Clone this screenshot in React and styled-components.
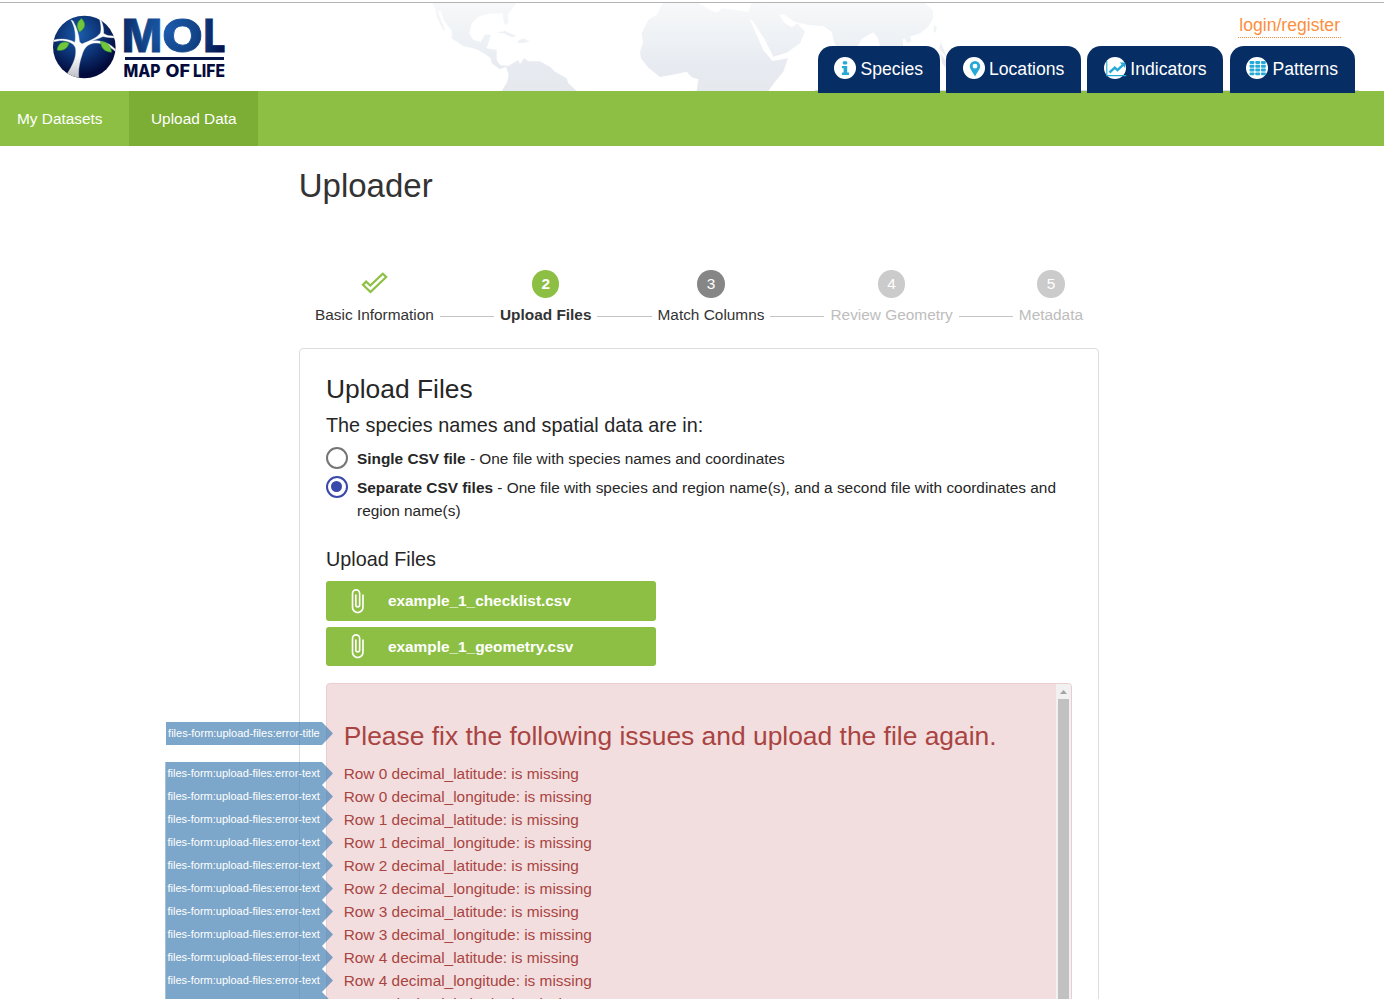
import React from 'react';
import styled, { createGlobalStyle } from 'styled-components';

const GlobalStyle = createGlobalStyle`
  * { box-sizing: border-box; }
  html, body { margin: 0; padding: 0; background: #fff; }
  body {
    font-family: "Liberation Sans", Arial, sans-serif;
    font-size: 15.4px;
    line-height: 23px;
    color: #333;
  }
`;

const Page = styled.div`
  height: 999px;
  overflow: hidden;
  background: #fff;
`;

const Header = styled.header`
  position: relative;
  margin-top: 2px;
  height: 89px;
  border-top: 1px solid #b3b3b3;
  display: flex;
  justify-content: space-between;
`;

const WorldMap = styled.svg`
  position: absolute;
  left: 420px;
  top: 0;
`;

const LogoLink = styled.a`
  display: block;
  margin: 9px 0 0 50px;
  height: 70px;
`;

const HeaderSide = styled.div`
  position: relative;
  z-index: 2;
  display: flex;
  flex-direction: column;
  align-items: flex-end;
  padding-right: 25px;
`;

const Login = styled.a`
  margin: 11px 18px 0 0;
  padding: 0 1px;
  height: 24px;
  line-height: 23px;
  font-size: 17.6px;
  color: #fc8f3d;
  border-bottom: 1px dotted #fc8f3d;
`;

const Tabs = styled.div`
  display: flex;
  gap: 6.6px;
  height: 45px;
  margin-top: 8px;
  padding: 0 4.4px 0 3px;
  border-bottom: 1px solid #d5d8dc;
`;

const Tab = styled.a`
  display: flex;
  align-items: center;
  gap: 4.4px;
  height: 47px;
  padding: 0 16.5px 3px;
  border-radius: 14px 14px 0 0;
  background: #062d64;
  color: #fff;
  font-size: 17.6px;
`;

const TabLabel = styled.span`
  padding-top: 2px;
`;

const TabIcon = styled.svg`
  width: 22px;
  height: 22px;
  flex: none;
`;

const Nav = styled.nav`
  display: flex;
  height: 55px;
  background: #8dbf44;
`;

const NavItem = styled.a`
  width: 129px;
  padding-left: ${(p) => (p.$active ? 22 : 17)}px;
  line-height: 55px;
  color: #fff;
  background: ${(p) => (p.$active ? '#7cad34' : 'transparent')};
`;

const Main = styled.main`
  width: 800px;
  margin-left: 299px;
`;

const PageTitle = styled.h1`
  margin: 0 0 0 -0.3px;
  padding-top: 21px;
  height: 124px;
  font-size: 33px;
  line-height: 37px;
  font-weight: 400;
`;

const Stepper = styled.div`
  display: flex;
  align-items: flex-end;
  gap: 6px;
  height: 57px;
  padding: 0 16px;
`;

const Step = styled.div`
  display: flex;
  flex-direction: column;
  align-items: center;
  gap: 5px;
  height: 57px;
  font-weight: ${(p) => (p.$current ? 700 : 400)};
  color: ${(p) => (p.$muted ? '#bdbdbd' : '#333')};
`;

const StepBadge = styled.span`
  display: flex;
  align-items: center;
  justify-content: center;
  width: 27.5px;
  height: 27.5px;
  flex: none;
  border-radius: 50%;
  background: ${(p) => p.$color};
  color: #fff;
`;

const StepLine = styled.span`
  flex: 1;
  height: 1px;
  margin-bottom: 10px;
  background: #c4c4c4;
`;

const Panel = styled.section`
  margin-top: 21px;
  height: 700px;
  padding: 26px 26px 0;
  border: 1px solid #ddd;
  border-radius: 4px;
`;

const Heading = styled.h2`
  margin: 0;
  font-size: 26.4px;
  line-height: 29px;
  font-weight: 400;
`;

const Subheading = styled.h3`
  margin: ${(p) => p.$top}px 0 0;
  font-size: 19.8px;
  line-height: 22px;
  font-weight: 400;
  color: #262626;
`;

const PanelHeading = styled(Heading)`
  color: #262626;
`;

const Option = styled.label`
  display: flex;
  gap: 9px;
  margin-top: ${(p) => p.$top}px;
  color: #262626;
`;

const Radio = styled.span`
  display: flex;
  align-items: center;
  justify-content: center;
  flex: none;
  width: 22px;
  height: 22px;
  border: 2px solid ${(p) => (p.$checked ? '#3949ab' : '#757575')};
  border-radius: 50%;
`;

const RadioDot = styled.span`
  width: 11px;
  height: 11px;
  margin-left: -0.5px;
  margin-top: -0.5px;
  border-radius: 50%;
  background: #3949ab;
`;

const FileButton = styled.div`
  display: flex;
  align-items: center;
  width: 330px;
  height: ${(p) => p.$height}px;
  margin-top: ${(p) => p.$top}px;
  padding-left: 17.6px;
  gap: 17.9px;
  border-radius: 3px;
  background: #8dbf44;
  color: #fff;
  font-weight: 700;
`;

const FileName = styled.span`
  line-height: 39px;
  align-self: flex-start;
`;

const Alert = styled.div`
  display: flex;
  justify-content: space-between;
  margin-top: 17px;
  height: 400px;
  border: 1px solid #ebccd1;
  border-radius: 4px;
  background: #f2dede;
  color: #a94442;
`;

const AlertBody = styled.div`
  padding: 38px 0 0 16.7px;
`;

const AlertTitle = styled(Heading)`
  position: relative;
  margin-bottom: 11px;
`;

const AlertRow = styled.div`
  position: relative;
  height: 23px;
`;

const Tag = styled.span`
  position: absolute;
  right: calc(100% + 10.7px);
  top: 0;
  height: 23px;
  padding: 0 13.3px 0 2.2px;
  background: rgba(70, 130, 180, 0.7);
  clip-path: polygon(0 0, calc(100% - 11px) 0, 100% 50%, calc(100% - 11px) 100%, 0 100%);
  color: #fff;
  font-size: 11px;
  line-height: 22px;
  white-space: nowrap;
`;

const Scrollbar = styled.div`
  display: flex;
  flex-direction: column;
  align-items: center;
  width: 15px;
  background: #f1f1f1;
  border-radius: 0 3px 0 0;
`;

const ScrollThumb = styled.div`
  width: 11px;
  flex: 1;
  background: #c1c1c1;
`;

const letterStyle = { fontFamily: 'Inter, sans-serif', fontWeight: 800 };

function Logo() {
  return (
    <svg width="180" height="70" viewBox="50 12 180 70" overflow="visible">
      <defs>
        <radialGradient id="globe" cx="0.42" cy="0.3" r="0.65">
          <stop offset="0" stopColor="#1b5cab" />
          <stop offset="0.55" stopColor="#0c3274" />
          <stop offset="1" stopColor="#020b3b" />
        </radialGradient>
        <radialGradient id="letters" gradientUnits="userSpaceOnUse" cx="168" cy="29" r="58">
          <stop offset="0" stopColor="#1b5bad" />
          <stop offset="0.5" stopColor="#124488" />
          <stop offset="1" stopColor="#041551" />
        </radialGradient>
        <linearGradient id="trunk" x1="0" y1="0" x2="0" y2="1">
          <stop offset="0.6" stopColor="#fff" />
          <stop offset="1" stopColor="#b8bbc2" />
        </linearGradient>
        <clipPath id="disc"><circle cx="84.3" cy="47" r="31.3" /></clipPath>
      </defs>
      <circle cx="84.3" cy="47" r="31.3" fill="url(#globe)" />
      <g clipPath="url(#disc)">
        <path fill="url(#trunk)" stroke="url(#trunk)" strokeWidth="0.400" d="M67 74C73 65 77 56 75.5 48C74 43 68 40.5 60 40.5L52 42V40.5C61 38 69 39 75 42.5C76 34 75 27 71 20L73 21C77 28 79 35 79.500 42L82 44C89 41 97 38 100.500 33C101.500 29 101 24 99.500 19L101 20C103 25 104 29 103.500 33C106 36 111 36 116 36V38C111 37.500 106 37.500 103 36.500C98 39 94 40 91 41C99 40 109 42 116 50L115 51C107 44 98 42 92 43.500C86 45 83.500 50 82 55C79 64 78 71 79 79L66 76Z" />
        <g fill="#72c63c" stroke="#309833" strokeWidth="0.6">
          <path d="M81.500 18.500C86 23 86 28 79.500 32C76 27 76.500 22 81.500 18.500Z" />
          <path d="M57 50C58.500 43 63 40.500 69 43C67.500 49 62.500 51.500 57 50Z" />
          <path d="M100.500 41.500C107 41.500 111 46 111.500 52.200C104.500 52 101 48 100.500 41.500Z" />
        </g>
      </g>
      <g {...letterStyle} fontSize="45.500" fill="url(#letters)" stroke="url(#letters)" strokeWidth="0.800">
        <text x="122" y="51.500" textLength="40" lengthAdjust="spacingAndGlyphs">M</text>
        <text x="162" y="51.500" textLength="41" lengthAdjust="spacingAndGlyphs">O</text>
        <text x="203.500" y="51.500" textLength="22" lengthAdjust="spacingAndGlyphs">L</text>
      </g>
      <rect x="125" y="57" width="99" height="3" fill="#06184a" />
      <g {...letterStyle} fontSize="17" fill="#020b3b">
        <text x="123.500" y="77" textLength="37" lengthAdjust="spacingAndGlyphs">MAP</text>
        <text x="165.500" y="77" textLength="24.500" lengthAdjust="spacingAndGlyphs">OF</text>
        <text x="193" y="77" textLength="32" lengthAdjust="spacingAndGlyphs">LIFE</text>
      </g>
    </svg>
  );
}

function MapBackground() {
  return (
    <WorldMap width="560" height="88" viewBox="0 9 1680 264">
      <defs>
        <linearGradient id="land" gradientUnits="userSpaceOnUse" x1="0" y1="9" x2="0" y2="273">
          <stop offset="0" stopColor="#f7f8f9" />
          <stop offset="0.5" stopColor="#ecf0f4" />
          <stop offset="0.65" stopColor="#e8ebf1" />
          <stop offset="1" stopColor="#e5e9ee" />
        </linearGradient>
      </defs>
      <g fill="url(#land)" strokeLinejoin="round">
        <path d="M38 9L45 25L50 50L62 75L72 92L75 88L65 65L55 35L62 32L72 62L95 92L95 115L130 138L170 148L200 165L212 175L215 190L240 208L258 200L266 225L262 245L245 273H470L445 250L440 235L405 215L390 200L360 184L325 184L312 174L300 192L295 180L265 198L240 195L230 180L230 150L200 145L213 105L195 103L182 125L160 120L148 100L155 70L175 50L200 42L248 40L252 70L260 75L265 66L264 42L290 9Z" />
        <path d="M228 98L255 93L290 108L275 112L250 100ZM292 124L310 115L330 125L298 130Z" />
        <path d="M728 9L712 42L685 60L665 100L669 125L660 155L663 175L685 203L720 231L755 225L800 215L815 232L835 238L830 273H1045L1065 245L1090 215L1104 175L1057 183L1030 150L988 55L1000 65L1035 120L1060 170L1100 158L1140 130L1155 95L1132 70L1115 82L1095 70L1078 45L1090 42L1125 66L1170 76L1210 78L1235 95L1243 130L1260 160H1300L1325 118L1345 105L1360 97L1372 112L1384 150H1450L1448 118L1475 108L1500 100L1525 80L1540 55L1538 30L1515 9H995L985 35L905 25L893 38L870 30L835 9Z" />
        <path d="M1454 116L1468 106L1475 124L1462 130ZM1542 75L1551 80L1546 100L1540 92ZM1562 125L1580 170L1570 160L1558 145ZM1562 160L1578 182V205L1566 190Z" />
      </g>
    </WorldMap>
  );
}

const glyphs = {
  info: <path transform="translate(0.400 0)" d="M8.300 5.600Q8.300 4.300 9.500 4.300H11.800Q12.900 4.300 12.900 5.400V6.300Q12.900 7.400 11.800 7.400H9.500Q8.300 7.400 8.300 6.300ZM7.500 9H12.800V15.500H14.600V18H7.500V15.500H9.200V11.300H7.500Z" />,
  pin: <path fillRule="evenodd" d="M12 4A5.200 5.200 0 0 0 6.800 9.200C6.800 12 9.500 14.600 12 19.500C14.500 14.600 17.200 12 17.200 9.200A5.200 5.200 0 0 0 12 4ZM12 6.800A2.400 2.400 0 1 1 12 11.600A2.400 2.400 0 0 1 12 6.800Z" />,
  chart: (
    <>
      <path d="M2.800 4V18.600H22.300" fill="none" stroke="#26a9d6" strokeWidth="1.100" />
      <path d="M5.500 15.500L10.800 10.700L13.500 13.200L19 7.800" fill="none" stroke="#26a9d6" strokeWidth="2.400" />
      <path d="M15.800 5.600H21.200V11Z" />
    </>
  ),
  grid: [4, 7.8, 11.6, 15.4].map((y) =>
    [3.6, 9.3, 15].map((x) => <rect key={`${x}-${y}`} x={x} y={y} width="4.800" height="2.900" rx="0.800" />)
  ),
};

function SectionTab({ icon, label }) {
  return (
    <Tab>
      <TabIcon viewBox="0 0 22 22" overflow="visible">
        <circle cx="11" cy="11" r="11" fill="#fff" />
        <g fill="#26a9d6">{glyphs[icon]}</g>
      </TabIcon>
      <TabLabel>{label}</TabLabel>
    </Tab>
  );
}

function CheckIcon() {
  return (
    <svg width="28" height="27.5" viewBox="360 270 28 27.500">
      <path d="M363 284.700L366.100 281.600L370.300 285.600L382.800 273.700L386.200 277L370.500 292Z" fill="none" stroke="#8dbf44" strokeWidth="2.200" />
    </svg>
  );
}

function ClipIcon() {
  return (
    <svg width="26.400" height="26.400" viewBox="0 0 24 24" fill="#fff">
      <path d="M16.500 6v11.500c0 2.210-1.790 4-4 4s-4-1.790-4-4V5a2.500 2.500 0 0 1 5 0v10.500c0 .55-.45 1-1 1s-1-.45-1-1V6H10v9.500a2.500 2.500 0 0 0 5 0V5c0-2.210-1.790-4-4-4S7 2.790 7 5v12.500c0 3.040 2.460 5.500 5.500 5.500s5.500-2.460 5.500-5.500V6h-1.500z" />
    </svg>
  );
}

const steps = [
  { label: 'Basic Information', done: true },
  { label: 'Upload Files', color: '#8dbf44', current: true },
  { label: 'Match Columns', color: '#868686' },
  { label: 'Review Geometry', color: '#cbcbcb', muted: true },
  { label: 'Metadata', color: '#cbcbcb', muted: true },
];

const errors = [0, 1, 2, 3, 4, 5].flatMap((row) => [
  `Row ${row} decimal_latitude: is missing`,
  `Row ${row} decimal_longitude: is missing`,
]).slice(0, 11);

export default function App() {
  return (
    <Page>
      <GlobalStyle />
      <Header>
        <MapBackground />
        <LogoLink><Logo /></LogoLink>
        <HeaderSide>
          <Login>login/register</Login>
          <Tabs>
            <SectionTab icon="info" label="Species" />
            <SectionTab icon="pin" label="Locations" />
            <SectionTab icon="chart" label="Indicators" />
            <SectionTab icon="grid" label="Patterns" />
          </Tabs>
        </HeaderSide>
      </Header>
      <Nav>
        <NavItem>My Datasets</NavItem>
        <NavItem $active>Upload Data</NavItem>
      </Nav>
      <Main>
        <PageTitle>Uploader</PageTitle>
        <Stepper>
          {steps.map((step, i) => (
            <React.Fragment key={step.label}>
              {i > 0 && <StepLine />}
              <Step $current={step.current} $muted={step.muted}>
                {step.done ? <CheckIcon /> : <StepBadge $color={step.color}>{i + 1}</StepBadge>}
                {step.label}
              </Step>
            </React.Fragment>
          ))}
        </Stepper>
        <Panel>
          <PanelHeading>Upload Files</PanelHeading>
          <Subheading $top={10}>The species names and spatial data are in:</Subheading>
          <Option $top={11}>
            <Radio />
            <span><b>Single CSV file</b> - One file with species names and coordinates</span>
          </Option>
          <Option $top={6}>
            <Radio $checked><RadioDot /></Radio>
            <span><b>Separate CSV files</b> - One file with species and region name(s), and a second file with coordinates and region name(s)</span>
          </Option>
          <Subheading $top={26}>Upload Files</Subheading>
          <FileButton $top={11} $height={40}><ClipIcon /><FileName>example_1_checklist.csv</FileName></FileButton>
          <FileButton $top={6} $height={39}><ClipIcon /><FileName>example_1_geometry.csv</FileName></FileButton>
          <Alert>
            <AlertBody>
              <AlertTitle>
                <Tag>files-form:upload-files:error-title</Tag>
                Please fix the following issues and upload the file again.
              </AlertTitle>
              {errors.map((message) => (
                <AlertRow key={message}>
                  <Tag>files-form:upload-files:error-text</Tag>
                  {message}
                </AlertRow>
              ))}
            </AlertBody>
            <Scrollbar>
              <svg width="15" height="15" viewBox="0 0 15 15"><path d="M4 10L7.500 6L11 10Z" fill="#a3a3a3" /></svg>
              <ScrollThumb />
            </Scrollbar>
          </Alert>
        </Panel>
      </Main>
    </Page>
  );
}
